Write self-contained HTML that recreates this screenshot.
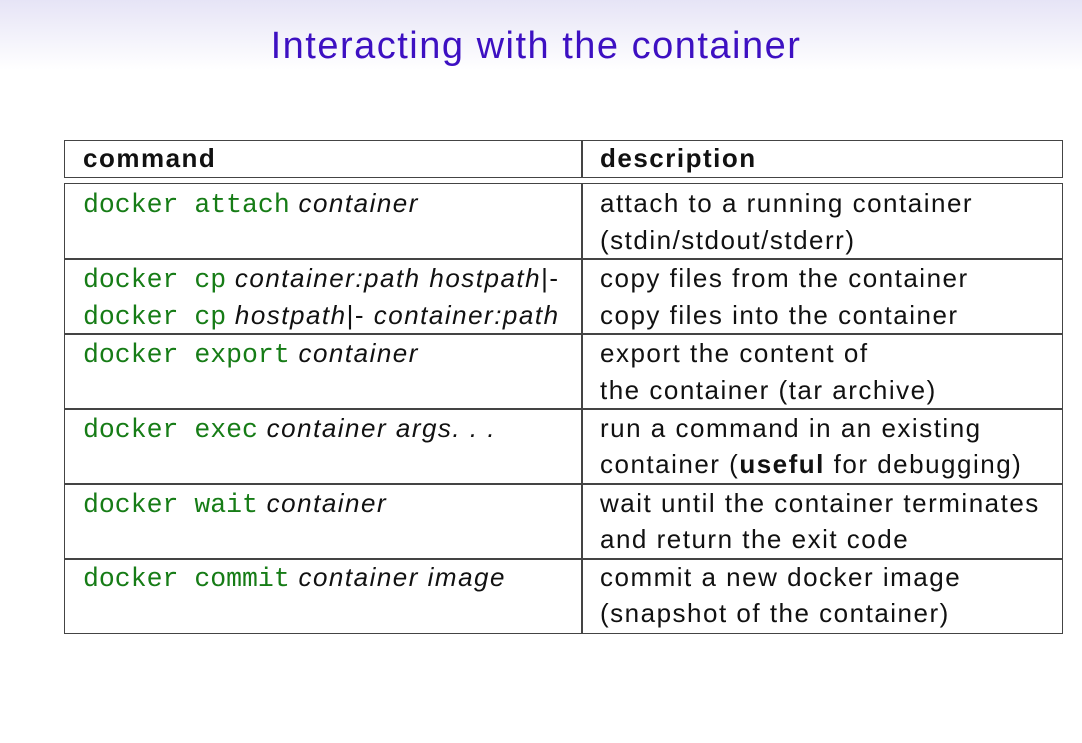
<!DOCTYPE html>
<html><head><meta charset="utf-8"><style>
body{margin:0;width:1082px;height:743px;overflow:hidden;position:relative;background:linear-gradient(#e6e4f6 0px,#ffffff 70px,#ffffff 743px);font-family:"Liberation Sans",sans-serif;}
.t{position:absolute;left:0;width:1072px;text-align:center;top:22px;font-size:38px;color:#3d10c2;line-height:48px;letter-spacing:1.5px;}
.box{position:absolute;border:1.5px solid #444;box-sizing:border-box;}
.v{position:absolute;left:581px;width:1.5px;background:#444;}
.h{position:absolute;left:64px;width:998px;height:1.5px;background:#444;}
.x{position:absolute;font-size:26px;line-height:30px;white-space:nowrap;color:#111;letter-spacing:1.5px;}
.m{font-family:"Liberation Mono",monospace;color:#167c16;font-size:26.5px;letter-spacing:0;}
i{font-style:italic;}
</style></head><body>
<div class="t">Interacting with the container</div>
<div class="box" style="left:64px;top:140px;width:999px;height:38px"></div>
<div class="v" style="top:140px;height:38px"></div>
<div class="box" style="left:64px;top:183px;width:999px;height:451px"></div>
<div class="v" style="top:183px;height:451px"></div>
<div class="h" style="top:258px"></div>
<div class="h" style="top:333px"></div>
<div class="h" style="top:408px"></div>
<div class="h" style="top:483px"></div>
<div class="h" style="top:558px"></div>

<div class="x" style="left:83px;top:143px"><b>command</b></div>
<div class="x" style="left:600px;top:143px"><b>description</b></div>

<div class="x" style="left:83px;top:188px"><span class="m">docker attach</span> <i>container</i></div>
<div class="x" style="left:600px;top:188px">attach to a running container</div>
<div class="x" style="left:600px;top:225px">(stdin/stdout/stderr)</div>

<div class="x" style="left:83px;top:263px"><span class="m">docker cp</span> <i>container:path hostpath</i>|-</div>
<div class="x" style="left:83px;top:300px"><span class="m">docker cp</span> <i>hostpath</i>|- <i>container:path</i></div>
<div class="x" style="left:600px;top:263px">copy files from the container</div>
<div class="x" style="left:600px;top:300px">copy files into the container</div>

<div class="x" style="left:83px;top:338px"><span class="m">docker export</span> <i>container</i></div>
<div class="x" style="left:600px;top:338px">export the content of</div>
<div class="x" style="left:600px;top:375px">the container (tar archive)</div>

<div class="x" style="left:83px;top:413px"><span class="m">docker exec</span> <i>container args. . .</i></div>
<div class="x" style="left:600px;top:413px">run a command in an existing</div>
<div class="x" style="left:600px;top:449px">container (<b>useful</b> for debugging)</div>

<div class="x" style="left:83px;top:488px"><span class="m">docker wait</span> <i>container</i></div>
<div class="x" style="left:600px;top:488px">wait until the container terminates</div>
<div class="x" style="left:600px;top:524px">and return the exit code</div>

<div class="x" style="left:83px;top:562px"><span class="m">docker commit</span> <i>container image</i></div>
<div class="x" style="left:600px;top:562px">commit a new docker image</div>
<div class="x" style="left:600px;top:598px">(snapshot of the container)</div>
</body></html>
